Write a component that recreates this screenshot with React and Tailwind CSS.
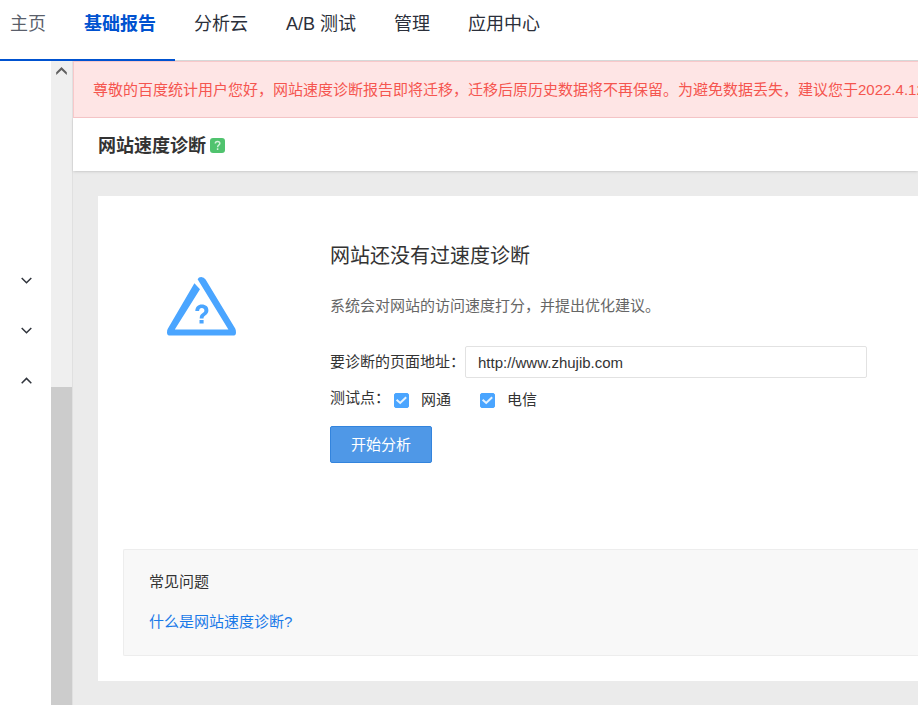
import { useState } from 'react';

const navItems = ['主页', '基础报告', '分析云', 'A/B 测试', '管理', '应用中心'];

const Chevron = ({ up }) => (
  <svg width="12" height="8" viewBox="0 0 12 8" fill="none" stroke="#30343c" strokeWidth="1.5">
    <path d={up ? 'M1.7 6.2 6.5 1.4l4.8 4.8' : 'M1.7 1 6.5 5.8l4.8-4.8'} />
  </svg>
);

const Header = () => (
  <header className="bg-white">
    <nav className="flex h-[61px] text-lg leading-6 text-[#2b2f3a] whitespace-nowrap">
      {/* the first two tabs share the blue underline */}
      <a href="#home" className="pt-3 pl-[10px] pr-[19px] border-b-2 border-[#0052d0] text-[#5a5f6b]">
        {navItems[0]}
      </a>
      <a href="#report" className="pt-3 px-[19px] border-b-2 border-[#0052d0] font-bold text-[#0052d0]">
        {navItems[1]}
      </a>
      <div className="flex flex-1 border-b border-[#d5d8d8]">
        {navItems.slice(2).map((item) => (
          <a key={item} href="#menu" className="pt-3 px-[19px]">{item}</a>
        ))}
      </div>
    </nav>
  </header>
);

const Sidebar = () => {
  const [open, setOpen] = useState([false, false, true]);

  const toggle = (index) => setOpen(open.map((value, i) => (i === index ? !value : value)));

  return (
    <aside className="flex shrink-0">
      <div className="w-[51px] pt-[195px] bg-white">
        {open.map((value, i) => (
          <button
            key={i}
            type="button"
            aria-label="展开或收起"
            aria-expanded={value}
            onClick={() => toggle(i)}
            className="flex h-[50px] w-full items-center justify-center"
          >
            <Chevron up={value} />
          </button>
        ))}
      </div>
      {/* Scrollbar */}
      <div className="w-[22px] flex flex-col bg-[#efefef] border-r border-[#e0e0e0]">
        <div className="h-5 flex items-center justify-center">
          <svg width="12" height="8" viewBox="0 0 12 8" fill="#606060">
            <path d="M5.5 0 10.8 5.2V8L5.5 3 .2 8V5.2z" />
          </svg>
        </div>
        <div className="h-[306px]" />
        <div className="flex-1 bg-[#cccccc]" />
      </div>
    </aside>
  );
};

const WarningIcon = () => (
  <svg width="70" height="60" viewBox="0 0 70 60" className="mt-9 shrink-0">
    <g fill="#4aa5ff">
      <path d="M30.6 2.2Q31.6 0 34.2 0Q37 0 38.6 2.6L68.2 51.6Q69 53 69 55.4Q69 58.6 65.8 58.6H3.4Q0 58.6 0 55.4Q0 53 .8 51.8L27.4 6.2L33 12.2L7.8 52.4H61.4Z" />
      <path d="M28.3 34C28.5 29.8 31 27.6 34.8 27.6C38.7 27.6 41.4 29.8 41.4 33.2C41.4 35.6 40.2 37.1 38.2 38.4C36.8 39.4 36.5 40 36.5 41.6H32.7C32.7 38.8 33.5 37.4 35.4 36.2C36.9 35.2 37.4 34.5 37.4 33.4C37.4 31.9 36.4 31 34.8 31C33.1 31 32.2 32.1 32.1 34ZM32.5 43H36.6V46.4H32.5Z" />
    </g>
  </svg>
);

const Check = ({ label }) => {
  const [checked, setChecked] = useState(true);

  return (
    <label className="flex items-center gap-3 h-6">
      <span className="relative flex">
        <input
          type="checkbox"
          checked={checked}
          onChange={() => setChecked(!checked)}
          className="appearance-none size-[15px] rounded-xs border border-[#4aa5ff] bg-white checked:bg-[#4aa5ff]"
        />
        {checked && (
          <svg viewBox="0 0 15 15" fill="none" stroke="#e4f2ff" strokeWidth="2" className="absolute inset-0 pointer-events-none">
            <path d="M2.6 6.8 6.2 10 12.2 4.2" />
          </svg>
        )}
      </span>
      {label}
    </label>
  );
};

const DiagnoseForm = () => {
  const [url, setUrl] = useState('http://www.zhujib.com');

  return (
    <form className="text-[#333333]" onSubmit={(e) => e.preventDefault()}>
      <div className="mt-7 flex items-center">
        <label htmlFor="page-url">要诊断的页面地址：</label>
        <input
          id="page-url"
          type="text"
          value={url}
          onChange={(e) => setUrl(e.target.value)}
          className="h-8 w-[402px] px-3 border border-[#e2e2e2] rounded-xs bg-white"
        />
      </div>
      <div className="mt-[10px] flex items-start">
        <span className="w-16 leading-5">测试点：</span>
        <div className="flex gap-[29px]">
          <Check label="网通" />
          <Check label="电信" />
        </div>
      </div>
      <button type="submit" className="mt-[14px] h-[37px] px-5 rounded-xs border border-[#3384dd] bg-[#4f98e7] text-white">
        开始分析
      </button>
    </form>
  );
};

const App = () => {
  return (
    <div className="min-h-screen flex flex-col overflow-hidden bg-white text-[15px] leading-6 font-['Liberation_Sans','Noto_Sans_CJK_SC',sans-serif]">
      <Header />
      <div className="flex flex-1">
        <Sidebar />
        <main className="flex-1 min-w-0 bg-[#ebebeb]">
          <div className="h-[57px] flex items-center pl-[19px] border-y border-l border-[#f8c8ca] bg-[#fee5e5] text-[#f5554f] whitespace-nowrap overflow-hidden">
            尊敬的百度统计用户您好，网站速度诊断报告即将迁移，迁移后原历史数据将不再保留。为避免数据丢失，建议您于2022.4.12
          </div>

          <div className="h-[53px] flex items-center gap-1 pt-[2px] px-[25px] bg-white shadow-sm">
            <h1 className="text-lg font-bold text-[#333333]">网站速度诊断</h1>
            <button type="button" aria-label="帮助" className="size-[15px] rounded-[3px] bg-[#50c36e]">
              <svg viewBox="0 0 15 15" fill="none" stroke="#d3f1db" strokeWidth="1.5">
                <path d="M5.3 5.6C5.3 4.2 6.2 3.4 7.5 3.4S9.8 4.2 9.8 5.4C9.8 7 7.6 7.1 7.6 9.2M7.6 10.2V11.9" />
              </svg>
            </button>
          </div>

          <section className="mt-[25px] mb-6 ml-[25px] pt-[45px] pb-[25px] bg-white">
            <div className="flex gap-[92px] pl-[69px]">
              <WarningIcon />
              <div className="pl-px whitespace-nowrap">
                <h2 className="text-xl leading-[30px] text-[#333333]">网站还没有过速度诊断</h2>
                <p className="mt-[23px] text-[#666666]">系统会对网站的访问速度打分，并提出优化建议。</p>
                <DiagnoseForm />
              </div>
            </div>

            {/* FAQ */}
            <div className="mt-[86px] ml-[25px] pt-5 pb-[21px] px-[25px] border border-r-0 border-[#ededed] rounded-l-xs bg-[#f8f8f8]">
              <h3 className="text-[#333333]">常见问题</h3>
              <a href="#faq" className="mt-4 block text-[#1a7ae8]">什么是网站速度诊断?</a>
            </div>
          </section>
        </main>
      </div>
    </div>
  );
};

export default App;
